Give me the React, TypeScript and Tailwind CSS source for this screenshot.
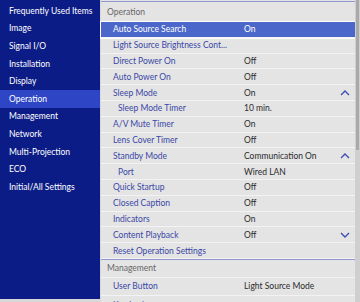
import React from 'react';

const menu = [
  'Frequently Used Items',
  'Image',
  'Signal I/O',
  'Installation',
  'Display',
  'Operation',
  'Management',
  'Network',
  'Multi-Projection',
  'ECO',
  'Initial/All Settings',
];

type Row = { label: string; value?: string; sub?: boolean; icon?: 'up' | 'down'; active?: boolean };

const rows: Row[] = [
  { label: 'Auto Source Search', value: 'On', active: true },
  { label: 'Light Source Brightness Cont...' },
  { label: 'Direct Power On', value: 'Off' },
  { label: 'Auto Power On', value: 'Off' },
  { label: 'Sleep Mode', value: 'On', icon: 'up' },
  { label: 'Sleep Mode Timer', value: '10 min.', sub: true },
  { label: 'A/V Mute Timer', value: 'On' },
  { label: 'Lens Cover Timer', value: 'Off' },
  { label: 'Standby Mode', value: 'Communication On', icon: 'up' },
  { label: 'Port', value: 'Wired LAN', sub: true },
  { label: 'Quick Startup', value: 'Off' },
  { label: 'Closed Caption', value: 'Off' },
  { label: 'Indicators', value: 'On' },
  { label: 'Content Playback', value: 'Off', icon: 'down' },
  { label: 'Reset Operation Settings' },
];

const Caret = ({ dir }: { dir: 'up' | 'down' }) => (
  <svg width="10" height="6" viewBox="0 0 10 6" className="text-[#3d4fb0]">
    <path
      d={dir === 'up' ? 'M1 5 L5 1 L9 5' : 'M1 1 L5 5 L9 1'}
      fill="none"
      stroke="currentColor"
      strokeWidth="1.4"
    />
  </svg>
);

const SettingRow = ({ row }: { row: Row }) => (
  <div
    className={`flex h-[15.8px] items-center whitespace-nowrap border-b border-[#f3f3f3] ${
      row.active ? 'bg-[#4b67c9] text-white outline outline-1 outline-white' : 'text-[#3a47a6]'
    }`}
  >
    <div className={`w-[143px] shrink-0 ${row.sub ? 'pl-[17px]' : 'pl-[12px]'}`}>{row.label}</div>
    <div className={`flex-1 ${row.active ? 'text-white' : 'text-[#2b2b2b]'}`}>{row.value}</div>
    <div className="w-[20px] flex justify-center">{row.icon && <Caret dir={row.icon} />}</div>
  </div>
);

export default function App() {
  return (
    <div
      className="flex w-[360px] h-[302px] bg-[#d8d8d8] overflow-hidden text-[8.5px] leading-[12px]"
      style={{ fontFamily: 'Lato, "Open Sans", sans-serif' }}
    >
      {/* Left menu */}
      <div className="w-[100px] h-[299px] bg-[#0c1c86] pt-[2px] shrink-0">
        {menu.map((m) => (
          <div
            key={m}
            className={`h-[17.6px] flex items-center pl-[9px] whitespace-nowrap text-white ${
              m === 'Operation' ? 'bg-[#2e46c6]' : ''
            }`}
          >
            {m}
          </div>
        ))}
      </div>

      {/* Settings list */}
      <div className="flex-1 ml-[1px] bg-[#e4e4e4] flex">
        <div className="flex-1">
          <div className="h-[21px] mt-[1px] border-t border-[#8f98cc] flex items-center pl-[6px] text-[#666]">
            Operation
          </div>
          {rows.map((r) => (
            <SettingRow key={r.label} row={r} />
          ))}
          <div className="h-[18px] border-t border-[#8f98cc] flex items-center pl-[6px] text-[#666]">
            Management
          </div>
          <div className="flex h-[19px] items-center whitespace-nowrap border-y border-[#f3f3f3] text-[#3a47a6]">
            <div className="w-[143px] pl-[12px]">User Button</div>
            <div className="text-[#2b2b2b]">Light Source Mode</div>
          </div>
          <div className="flex h-[16px] items-start pt-[3px] text-[#3a47a6]">
            <div className="pl-[12px]">Key Lock</div>
          </div>
        </div>
        {/* Scrollbar */}
        <div className="w-[5px] bg-[#cfcfcf] flex flex-col">
          <div className="h-[150px] mx-[1px] bg-[#a9a9a9]" />
        </div>
      </div>
    </div>
  );
}
